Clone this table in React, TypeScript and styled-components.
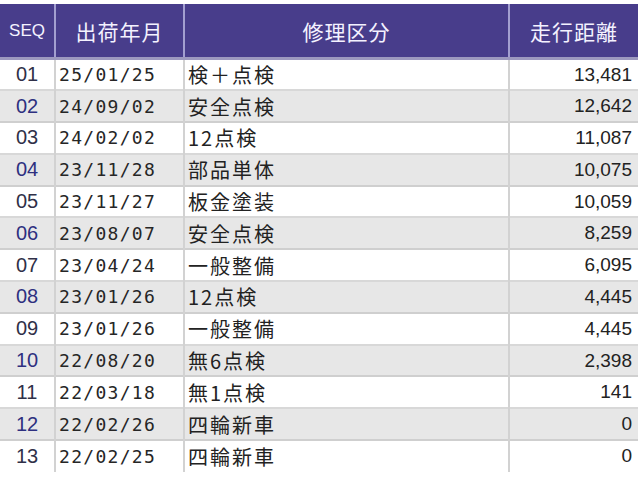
import React from 'react';
import styled, { createGlobalStyle } from 'styled-components';

const GlobalStyle = createGlobalStyle`
  html, body {
    margin: 0;
    padding: 0;
    background: #fff;
  }
`;

const Page = styled.div`
  padding-top: 4px;
  width: 638px;
  font-family: 'Liberation Sans', 'Noto Sans CJK JP', sans-serif;
`;

const Table = styled.table`
  width: 638px;
  border-collapse: collapse;
  table-layout: fixed;
`;

const HeadCell = styled.th<{ $small?: boolean }>`
  height: 53px;
  padding: 0;
  background: #483d8b;
  color: #f4f2ff;
  font-weight: normal;
  font-family: ${p => (p.$small ? "'Liberation Sans', sans-serif" : "'Noto Sans CJK JP', sans-serif")};
  font-size: ${p => (p.$small ? '17px' : '21px')};
  letter-spacing: ${p => (p.$small ? '0' : '1px')};
  text-align: center;
  border-left: 2px solid #a39fd0;
  border-bottom: 3px solid #9d99bf;
  &:first-child {
    border-left: none;
  }
`;

const Row = styled.tr<{ $even: boolean }>`
  height: 31.8px;
  background: ${p => (p.$even ? '#e7e7e7' : '#ffffff')};
  border-bottom: 2px solid ${p => (p.$even ? '#cfcfcf' : '#d8d8d8')};
  &:last-child {
    border-bottom: none;
  }
`;

const Cell = styled.td<{ $align?: 'left' | 'center' | 'right' }>`
  padding: 0 6px 0 3px;
  font-size: 19px;
  color: #222;
  text-align: ${p => p.$align ?? 'left'};
  border-left: 2px solid #d2d2d2;
  white-space: nowrap;
  &:first-child {
    border-left: none;
  }
`;

const SeqCell = styled(Cell)<{ $even: boolean }>`
  padding: 0;
  font-size: 20px;
  color: ${p => (p.$even ? '#2e3080' : '#2f3048')};
`;

const DateCell = styled(Cell)`
  font-family: 'DejaVu Sans Mono', monospace;
  font-size: 18px;
  letter-spacing: 1.3px;
  color: #262626;
`;

const KindCell = styled(Cell)`
  font-family: 'Noto Sans CJK JP', sans-serif;
  font-size: 20px;
  letter-spacing: 2px;
`;

type Record = { seq: string; date: string; kind: string; km: string };

const records: Record[] = [
  { seq: '01', date: '25/01/25', kind: '検＋点検', km: '13,481' },
  { seq: '02', date: '24/09/02', kind: '安全点検', km: '12,642' },
  { seq: '03', date: '24/02/02', kind: '12点検', km: '11,087' },
  { seq: '04', date: '23/11/28', kind: '部品単体', km: '10,075' },
  { seq: '05', date: '23/11/27', kind: '板金塗装', km: '10,059' },
  { seq: '06', date: '23/08/07', kind: '安全点検', km: '8,259' },
  { seq: '07', date: '23/04/24', kind: '一般整備', km: '6,095' },
  { seq: '08', date: '23/01/26', kind: '12点検', km: '4,445' },
  { seq: '09', date: '23/01/26', kind: '一般整備', km: '4,445' },
  { seq: '10', date: '22/08/20', kind: '無6点検', km: '2,398' },
  { seq: '11', date: '22/03/18', kind: '無1点検', km: '141' },
  { seq: '12', date: '22/02/26', kind: '四輪新車', km: '0' },
  { seq: '13', date: '22/02/25', kind: '四輪新車', km: '0' },
];

const App = () => {
  return (
    <Page>
      <GlobalStyle />
      <Table>
        <colgroup>
          <col style={{ width: 55 }} />
          <col style={{ width: 129 }} />
          <col style={{ width: 325 }} />
          <col style={{ width: 129 }} />
        </colgroup>
        <thead>
          <tr>
            <HeadCell $small>SEQ</HeadCell>
            <HeadCell>出荷年月</HeadCell>
            <HeadCell>修理区分</HeadCell>
            <HeadCell>走行距離</HeadCell>
          </tr>
        </thead>
        <tbody>
          {records.map((r, i) => {
            const even = i % 2 === 1;
            return (
              <Row key={r.seq} $even={even}>
                <SeqCell $even={even} $align="center">{r.seq}</SeqCell>
                <DateCell>{r.date}</DateCell>
                <KindCell>{r.kind}</KindCell>
                <Cell $align="right">{r.km}</Cell>
              </Row>
            );
          })}
        </tbody>
      </Table>
    </Page>
  );
};

export default App;
